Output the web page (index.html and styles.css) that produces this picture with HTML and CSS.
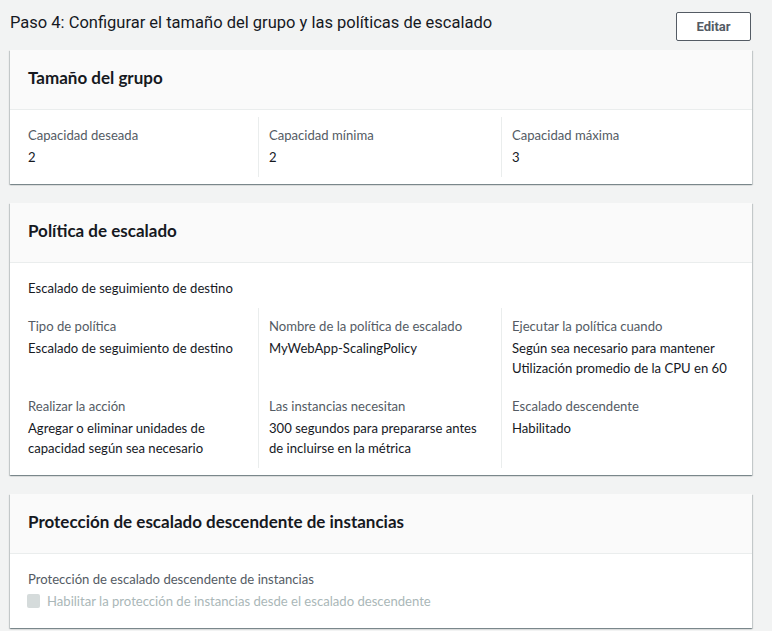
FILE: index.html
```html
<!DOCTYPE html>
<html lang="es">
<head>
<meta charset="utf-8">
<link rel="stylesheet" href="styles.css">
</head>
<body>
<div class="page">
  <div class="step-head">
    <h1 class="step-title">Paso 4: Configurar el tamaño del grupo y las políticas de escalado</h1>
    <button class="btn">Editar</button>
  </div>

  <section class="card">
    <div class="card-head"><h2 class="card-title">Tamaño del grupo</h2></div>
    <div class="card-body">
      <div class="cols">
        <div class="cell"><div class="label">Capacidad deseada</div><div class="value">2</div></div>
        <div class="cell"><div class="label">Capacidad mínima</div><div class="value">2</div></div>
        <div class="cell"><div class="label">Capacidad máxima</div><div class="value">3</div></div>
      </div>
    </div>
  </section>

  <section class="card">
    <div class="card-head"><h2 class="card-title">Política de escalado</h2></div>
    <div class="card-body">
      <div class="cell plain"><div class="value">Escalado de seguimiento de destino</div></div>
      <div class="cols">
        <div class="cell"><div class="label">Tipo de política</div><div class="value">Escalado de seguimiento de destino</div></div>
        <div class="cell"><div class="label">Nombre de la política de escalado</div><div class="value">MyWebApp-ScalingPolicy</div></div>
        <div class="cell"><div class="label">Ejecutar la política cuando</div><div class="value">Según sea necesario para mantener Utilización promedio de la CPU en 60</div></div>
        <div class="cell"><div class="label">Realizar la acción</div><div class="value">Agregar o eliminar unidades de capacidad según sea necesario</div></div>
        <div class="cell"><div class="label">Las instancias necesitan</div><div class="value">300 segundos para prepararse antes de incluirse en la métrica</div></div>
        <div class="cell"><div class="label">Escalado descendente</div><div class="value">Habilitado</div></div>
      </div>
    </div>
  </section>

  <section class="card">
    <div class="card-head"><h2 class="card-title">Protección de escalado descendente de instancias</h2></div>
    <div class="card-body">
      <div class="cell plain">
        <div class="label">Protección de escalado descendente de instancias</div>
        <label class="check"><span class="box"></span><span>Habilitar la protección de instancias desde el escalado descendente</span></label>
      </div>
    </div>
  </section>
</div>
</body>
</html>
```

FILE: styles.css
```css
* { box-sizing: border-box; }
html, body { margin: 0; padding: 0; }
body {
  background: #f2f3f3;
  font-family: "Lato", "Open Sans", sans-serif;
  font-size: 13.1px;
  line-height: 20px;
  color: #16191f;
}
.page {
  padding: 12px 20px 0 10px;
}
.step-head {
  display: flex;
  justify-content: space-between;
  align-items: flex-start;
  height: 38px;
}
.step-title {
  margin: 0;
  font-family: "Roboto", "Open Sans", sans-serif;
  font-weight: 400;
  font-size: 16.5px;
  line-height: 22px;
  color: #16191f;
}
.btn {
  width: 75px;
  height: 29px;
  margin-right: 1px;
  background: #fff;
  border: 1px solid #545b64;
  border-radius: 2px;
  color: #545b64;
  font-family: "Roboto", sans-serif;
  font-weight: 700;
  font-size: 13px;
  padding: 0;
}
.card {
  background: #fff;
  box-shadow: 0 1px 1px 0 rgba(0,28,36,.3), 1px 1px 1px 0 rgba(0,28,36,.15), -1px 1px 1px 0 rgba(0,28,36,.15);
  margin-bottom: 19px;
}
.card-head {
  background: #fafafa;
  border-bottom: 1px solid #eaeded;
  height: 60px;
  display: flex;
  align-items: center;
  padding: 0 18px 4px;
}
.card-title {
  margin: 0;
  font-size: 17px;
  font-weight: 700;
  line-height: 22px;
  color: #16191f;
}
.card-body {
  padding: 7px 8px 7px;
}
.cols {
  display: grid;
  grid-template-columns: 240px 243px 1fr;
}
.cell {
  padding: 8px 10px 10px;
  border-left: 1px solid #eaeded;
}
.cols .cell:nth-child(3n+1), .cell.plain { border-left: none; }
.label { color: #545b64; margin-bottom: 2px; }
.value { color: #16191f; }
.check {
  display: flex;
  align-items: center;
  gap: 7px;
  color: #aab7b8;
}
.box {
  width: 13px;
  height: 14px;
  border-radius: 2px;
  background: #d5dbdb;
  margin-left: -1px;
}
```
